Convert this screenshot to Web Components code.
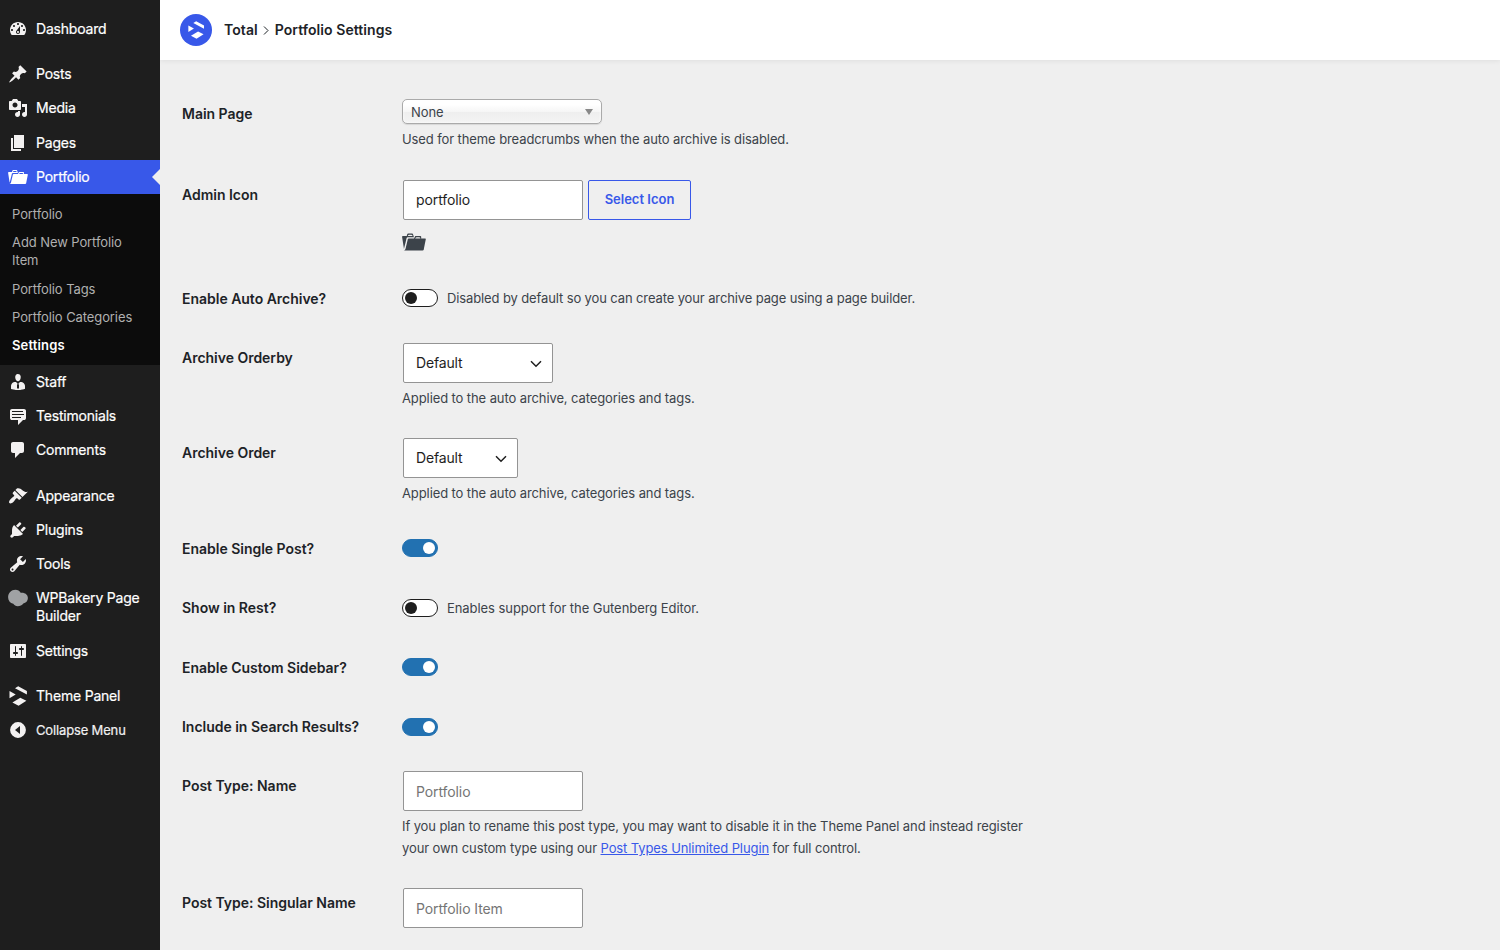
<!DOCTYPE html>
<html lang="en">
<head>
<meta charset="utf-8">
<title>Portfolio Settings</title>
<style>
html, body {
    height: 100%;
    margin: 0;
}
body {
    overflow: hidden;
    background: #efefef;
    color: #3c434a;
    font-family: Inter, "Liberation Sans", sans-serif;
    font-size: 13px;
}
</style>
</head>
<body>
<admin-shell>
    <admin-menu slot="menu">
        <menu-item icon="dashboard">Dashboard</menu-item>
        <menu-item icon="post" separated>Posts</menu-item>
        <menu-item icon="media">Media</menu-item>
        <menu-item icon="page">Pages</menu-item>
        <menu-item icon="portfolio" current>Portfolio</menu-item>
        <sub-menu>
            <sub-item>Portfolio</sub-item>
            <sub-item>Add New Portfolio Item</sub-item>
            <sub-item>Portfolio Tags</sub-item>
            <sub-item>Portfolio Categories</sub-item>
            <sub-item current>Settings</sub-item>
        </sub-menu>
        <menu-item icon="person">Staff</menu-item>
        <menu-item icon="testimonial">Testimonials</menu-item>
        <menu-item icon="comment">Comments</menu-item>
        <menu-item icon="appearance" separated>Appearance</menu-item>
        <menu-item icon="plugin">Plugins</menu-item>
        <menu-item icon="tool">Tools</menu-item>
        <menu-item icon="bakery">WPBakery Page Builder</menu-item>
        <menu-item icon="settings">Settings</menu-item>
        <menu-item icon="total" separated>Theme Panel</menu-item>
        <menu-item icon="collapse" small>Collapse Menu</menu-item>
    </admin-menu>
    <page-header slot="header">
        <span>Total</span>
        <span slot="page">Portfolio Settings</span>
    </page-header>
    <setting-row label="Main Page" style="height: 81px">
        <chosen-select>None</chosen-select>
        <help-text slot="help">Used for theme breadcrumbs when the auto archive is disabled.</help-text>
    </setting-row>
    <setting-row label="Admin Icon" style="height: 104px">
        <text-field value="portfolio"></text-field>
        <outline-button>Select Icon</outline-button>
        <dash-icon slot="help" name="portfolio" style="--size: 24px; margin-top: 10px"></dash-icon>
    </setting-row>
    <setting-row label="Enable Auto Archive?" style="height: 59px">
        <toggle-switch>Disabled by default so you can create your archive page using a page builder.</toggle-switch>
    </setting-row>
    <setting-row label="Archive Orderby" style="height: 95px">
        <select-box style="width: 150px">Default</select-box>
        <help-text slot="help">Applied to the auto archive, categories and tags.</help-text>
    </setting-row>
    <setting-row label="Archive Order" style="height: 96px">
        <select-box style="width: 115px">Default</select-box>
        <help-text slot="help">Applied to the auto archive, categories and tags.</help-text>
    </setting-row>
    <setting-row label="Enable Single Post?" style="height: 59px">
        <toggle-switch checked></toggle-switch>
    </setting-row>
    <setting-row label="Show in Rest?" style="height: 60px">
        <toggle-switch style="margin-top: 6px; letter-spacing: -.06px">Enables support for the Gutenberg Editor.</toggle-switch>
    </setting-row>
    <setting-row label="Enable Custom Sidebar?" style="height: 59px">
        <toggle-switch checked></toggle-switch>
    </setting-row>
    <setting-row label="Include in Search Results?" style="height: 59px">
        <toggle-switch checked style="margin-top: 6px"></toggle-switch>
    </setting-row>
    <setting-row label="Post Type: Name" style="height: 117px">
        <text-field placeholder="Portfolio"></text-field>
        <help-text slot="help">If you plan to rename this post type, you may want to disable it in the Theme Panel and instead register<br>your own custom type using our <a href="#">Post Types Unlimited Plugin</a> for full control.</help-text>
    </setting-row>
    <setting-row label="Post Type: Singular Name" style="height: 76px">
        <text-field placeholder="Portfolio Item"></text-field>
    </setting-row>
</admin-shell>

<script>
const ICONS = {
    dashboard: '<path d="M3.76 16h12.48c1.1-1.37 1.76-3.11 1.76-5 0-4.42-3.58-8-8-8s-8 3.58-8 8c0 1.89.66 3.63 1.76 5zM10 4c.55 0 1 .45 1 1s-.45 1-1 1-1-.45-1-1 .45-1 1-1zM6 6c.55 0 1 .45 1 1s-.45 1-1 1-1-.45-1-1 .45-1 1-1zm8 0c.55 0 1 .45 1 1s-.45 1-1 1-1-.45-1-1 .45-1 1-1zm-5.37 5.55L12 7v6c0 1.1-.9 2-2 2s-2-.9-2-2c0-.57.24-1.08.63-1.45zM4 10c.55 0 1 .45 1 1s-.45 1-1 1-1-.45-1-1 .45-1 1-1zm12 0c.55 0 1 .45 1 1s-.45 1-1 1-1-.45-1-1 .45-1 1-1zm-5 3c0-.55-.45-1-1-1s-1 .45-1 1 .45 1 1 1 1-.45 1-1z"/>',
    post: '<path d="M10.44 3.02l1.82-1.82 6.36 6.35-1.83 1.82c-1.05-.68-2.48-.57-3.41.36l-.75.75c-.92.93-1.04 2.35-.35 3.41l-1.83 1.82-2.41-2.41-2.8 2.79c-.42.42-3.38 2.71-3.8 2.29s1.86-3.39 2.28-3.81l2.79-2.79L4.1 9.36l1.83-1.82c1.05.69 2.48.57 3.4-.36l.75-.75c.93-.92 1.05-2.35.36-3.41z"/>',
    media: '<path d="M13 11V4c0-.55-.45-1-1-1h-1.67L9 1H5L3.67 3H2c-.55 0-1 .45-1 1v7c0 .55.45 1 1 1h10c.55 0 1-.45 1-1zM7 4.5c1.38 0 2.5 1.12 2.5 2.5S8.38 9.5 7 9.5 4.5 8.38 4.5 7 5.62 4.5 7 4.5zM14 6h5v10.5c0 1.38-1.12 2.5-2.5 2.5S14 17.88 14 16.5s1.12-2.5 2.5-2.5c.17 0 .34.02.5.05V9h-3V6zm-4 8.05V13h2v3.5c0 1.38-1.12 2.5-2.5 2.5S7 17.88 7 16.5 8.12 14 9.5 14c.17 0 .34.02.5.05z"/>',
    page: '<path d="M6 15V2h10v13H6zm-1 1h8v2H3V5h2v11z"/>',
    portfolio: '<path d="M4 5H.78c-.37 0-.74.32-.69.84l1.56 9.99S3.5 8.47 3.86 6.7c.11-.53.61-.7.98-.7H10s-.7-2.08-.77-2.31C9.11 3.25 8.89 3 8.45 3H5.14c-.36 0-.7.23-.8.64C4.25 4.04 4 5 4 5zm4.88 0h-4s.42-1 .87-1h2.13c.48 0 1 1 1 1zM2.67 16.25c-.31.47-.76.75-1.26.75h15.73c.54 0 .92-.31 1.03-.83.44-2.19 1.68-8.44 1.68-8.44.07-.5-.3-.73-.62-.73H16V5.53c0-.16-.26-.53-.66-.53h-3.76c-.52 0-.87.58-.87.58L10 7H5.59c-.32 0-.63.19-.69.5 0 0-1.59 6.7-1.72 7.33-.07.37-.22.99-.51 1.42zM15.38 7H11s.58-1 1.13-1h2.29c.71 0 .96 1 .96 1z"/>',
    person: '<path d="M7.3 6l-.03-.19c-.04-.37-.05-.73-.03-1.08.02-.36.1-.71.25-1.04.14-.32.31-.61.52-.86s.49-.46.83-.6c.34-.15.72-.23 1.13-.23.69 0 1.26.2 1.71.59s.76.87.91 1.44.18 1.16.09 1.78l-.03.19c-.01.09-.05.25-.11.48-.05.24-.12.47-.2.69-.08.21-.19.45-.34.72-.14.27-.3.49-.47.69-.18.19-.4.34-.67.48-.27.13-.55.19-.86.19s-.59-.06-.87-.19c-.26-.13-.49-.29-.67-.5-.18-.2-.34-.42-.49-.66-.15-.25-.26-.49-.34-.73-.09-.25-.16-.47-.21-.67-.06-.21-.1-.37-.12-.5zm9.200 6.240c.41.7.5 1.410.5 2.140v2.490c0 .03-.12.08-.29.13-.18.04-.42.13-.97.27-.55.12-1.100.24-1.650.34s-1.190.19-1.950.27c-.75.08-1.460.12-2.130.12-.68 0-1.390-.04-2.140-.12-.75-.07-1.400-.17-1.980-.27-.58-.11-1.080-.23-1.560-.34-.49-.11-.8-.21-1.060-.29L3 16.870v-2.490c0-.75.07-1.460.46-2.150s.81-1.250 1.500-1.680C5.660 10.120 7.190 10 8 10l1.670 1.670L9 13v3l1.020 1.080L11 16v-3l-.68-1.330L11.970 10c.77 0 2.200.07 2.900.52.71.45 1.210 1.020 1.630 1.720z"/>',
    testimonial: '<path d="M4 3h12c.55 0 1.02.2 1.41.59S18 4.45 18 5v7c0 .55-.2 1.02-.59 1.41S16.55 14 16 14h-1l-5 5v-5H4c-.55 0-1.02-.2-1.41-.59S2 12.55 2 12V5c0-.55.2-1.02.59-1.41S3.45 3 4 3zm11 2H4v1h11V5zm1 3H4v1h12V8zm-3 3H4v1h9v-1z"/>',
    comment: '<path d="M5 2h9c1.1 0 2 .9 2 2v7c0 1.1-.9 2-2 2h-2l-5 5v-5H5c-1.1 0-2-.9-2-2V4c0-1.1.9-2 2-2z"/>',
    appearance: '<path d="M14.48 11.06L7.41 3.99l1.5-1.5c.5-.56 2.3-.47 3.51.32 1.21.8 1.43 1.28 2.91 2.1 1.18.64 2.45 1.26 4.45.85zm-.71.71L6.7 4.7 4.93 6.47c-.39.39-.39 1.02 0 1.41l1.06 1.06c.39.39.39 1.03 0 1.42-.6.6-1.43 1.11-2.21 1.69-.35.26-.7.53-1.01.84C1.43 14.23.4 16.08 1.4 17.07c.99 1 2.84-.03 4.18-1.36.31-.31.58-.66.85-1.02.57-.78 1.08-1.61 1.69-2.21.39-.39 1.02-.39 1.41 0l1.06 1.06c.39.39 1.02.39 1.41 0z"/>',
    plugin: '<path d="M13.11 4.36L9.87 7.6 8 5.73l3.24-3.24c.35-.34 1.05-.2 1.56.32.52.51.66 1.21.31 1.55zm-8 1.77l.91-1.12 9.01 9.01-1.19.84c-.71.71-2.63 1.16-3.82 1.16H6.14L4.9 17.26c-.59.59-1.54.59-2.12 0-.59-.58-.59-1.53 0-2.12l1.24-1.24v-3.88c0-1.13.4-3.19 1.09-3.89zm7.26 3.97l3.24-3.24c.34-.35 1.04-.21 1.55.31.52.51.66 1.21.31 1.55l-3.24 3.25z"/>',
    tool: '<path d="M16.68 9.77c-1.34 1.34-3.3 1.67-4.95.99l-5.41 6.52c-.99.99-2.59.99-3.58 0s-.99-2.59 0-3.57l6.52-5.42c-.68-1.65-.35-3.61.99-4.95 1.28-1.28 3.12-1.62 4.72-1.06l-2.89 2.89 2.82 2.82 2.86-2.87c.53 1.58.18 3.39-1.08 4.65zM3.81 16.21c.4.39 1.04.39 1.43 0 .4-.4.4-1.04 0-1.43-.39-.4-1.03-.4-1.43 0-.39.39-.39 1.03 0 1.43z"/>',
    bakery: '<path fill="#a0a2a4" d="M7.4 1.8c2.4 0 4.2 1.1 5.3 3 3.8-.6 7.2 1.6 7.2 5.2 0 3-2 5-4.6 5.5-1.3 1.7-3.2 2.8-5.6 2.8-2 0-3.4-1-4.4-2.5C2 14.9.1 12.5.1 9.2.1 5 3.3 1.8 7.4 1.8z"/>',
    settings: '<path d="M18 16V4c0-.55-.45-1-1-1H3c-.55 0-1 .45-1 1v12c0 .55.45 1 1 1h14c.55 0 1-.45 1-1zM8 11h1c.55 0 1 .45 1 1s-.45 1-1 1H8v1.5c0 .28-.22.5-.5.5s-.5-.22-.5-.5V13H6c-.55 0-1-.45-1-1s.45-1 1-1h1V5.5c0-.28.22-.5.5-.5s.5.22.5.5V11zm5-2h-1c-.55 0-1-.45-1-1s.45-1 1-1h1V5.5c0-.28.22-.5.5-.5s.5.22.5.5V7h1c.55 0 1 .45 1 1s-.45 1-1 1h-1v5.5c0 .28-.22.5-.5.5s-.5-.22-.5-.5V9z"/>',
    total: '<path d="M7 2.2 10.2.3l8.7 4.7v3.6zM1.5 4.9l6.2 3.5-6.2 3.8zM4.4 16.5l7.9-4.7 6.1 3-7.8 4.9z"/>',
    collapse: '<path fill-rule="evenodd" d="M10 2.1a7.9 7.9 0 1 1 0 15.8 7.9 7.9 0 0 1 0-15.8zM12 6v8l-5-4z"/>',
};

// Attaches an open root holding the given styles and markup
function render(element, html) {
    const template = document.createElement('template');
    template.innerHTML = html;
    element.attachShadow({mode: 'open'}).appendChild(template.content.cloneNode(true));
}

class DashIcon extends HTMLElement {
    connectedCallback() {
        if (this.shadowRoot) {
            return;
        }
        render(this, `
<style>
:host {
    display: block;
    flex: none;
    width: var(--size, 20px);
    height: var(--size, 20px);
}
svg {
    display: block;
    width: 100%;
    height: 100%;
    fill: currentColor;
}
</style>
<svg viewBox="0 0 20 20">${ICONS[this.getAttribute('name')] || ''}</svg>`);
    }
}

class AdminShell extends HTMLElement {
    constructor() {
        super();
        render(this, `
<style>
:host {
    display: grid;
    grid-template-columns: 160px 1fr;
    height: 100vh;
}
main {
    min-width: 0;
    overflow: hidden;
}
.settings {
    padding: 25px 22px 0;
}
</style>
<slot name="menu"></slot>
<main>
    <slot name="header"></slot>
    <div class="settings"><slot></slot></div>
</main>`);
    }
}

class AdminMenu extends HTMLElement {
    constructor() {
        super();
        render(this, `
<style>
:host {
    display: block;
    padding-top: 12px;
    background: #1e1e1e;
}
</style>
<slot></slot>`);
    }
}

class MenuItem extends HTMLElement {
    connectedCallback() {
        if (this.shadowRoot) {
            return;
        }
        render(this, `
<style>
:host {
    display: flex;
    position: relative;
    gap: 8px;
    padding: 8px 12px 8px 8px;
    color: #fff;
    font-size: 14px;
    letter-spacing: -.2px;
    line-height: 18.2px;
    -webkit-text-stroke: .2px currentColor;
}
:host([separated]) {
    margin-top: 11px;
}
:host([current]) {
    background: #3858e9;
}
:host([current])::after {
    content: "";
    position: absolute;
    right: 0;
    top: 9px;
    border: 8px solid transparent;
    border-left: 0;
    border-right-color: #efefef;
}
:host([small]) {
    margin-top: -.5px;
    font-size: 13px;
    letter-spacing: -.15px;
    color: #f0f0f1;
}
dash-icon {
    margin: -1px 0;
    height: 20px;
    color: #f3f1f1;
}
:host([current]) dash-icon {
    color: #fff;
}
</style>
<dash-icon name="${this.getAttribute('icon')}"></dash-icon>
<span><slot></slot></span>`);
    }
}

class SubMenu extends HTMLElement {
    constructor() {
        super();
        render(this, `
<style>
:host {
    display: block;
    padding: 6px 0 5.8px;
    background: #0c0c0c;
}
</style>
<slot></slot>`);
    }
}

class SubItem extends HTMLElement {
    constructor() {
        super();
        render(this, `
<style>
:host {
    display: block;
    padding: 5px 12px;
    color: #b0b0b0;
    letter-spacing: -.09px;
    line-height: 18.2px;
}
:host([current]) {
    color: #fff;
    font-weight: 600;
    letter-spacing: .15px;
}
</style>
<slot></slot>`);
    }
}

class PageHeader extends HTMLElement {
    constructor() {
        super();
        render(this, `
<style>
:host {
    display: flex;
    box-sizing: border-box;
    align-items: center;
    height: 60px;
    padding-left: 20px;
    background: #fff;
    box-shadow: 0 1px 5px rgba(0, 0, 0, .07);
    color: #1d2327;
    font-size: 14px;
    font-weight: 600;
    letter-spacing: .07px;
    line-height: 18px;
}
.logo {
    display: grid;
    place-items: center;
    width: 32px;
    height: 32px;
    margin-right: 12px;
    border-radius: 50%;
    background: #3858e9;
    color: #fff;
    --size: 18px;
}
.sep {
    width: 6px;
    height: 9px;
    margin: 0 5.5px;
    fill: none;
    stroke: #1d2327;
}
</style>
<div class="logo"><dash-icon name="total"></dash-icon></div>
<slot></slot>
<svg class="sep" viewBox="0 0 6 9"><path d="M1 .5l4 4-4 4"/></svg>
<slot name="page"></slot>`);
    }
}

class SettingRow extends HTMLElement {
    connectedCallback() {
        if (this.shadowRoot) {
            return;
        }
        render(this, `
<style>
:host {
    display: grid;
    grid-template-columns: 220px 1fr;
}
.label {
    padding-top: 20px;
    color: #1d2327;
    font-size: 14px;
    font-weight: 600;
    letter-spacing: -.02px;
    line-height: 18px;
}
.field {
    padding-top: 14px;
}
.controls {
    display: flex;
    gap: 5px;
}
</style>
<div class="label">${this.getAttribute('label')}</div>
<div class="field">
    <div class="controls"><slot></slot></div>
    <slot name="help"></slot>
</div>`);
    }
}

class HelpText extends HTMLElement {
    constructor() {
        super();
        render(this, `
<style>
:host {
    display: block;
    margin-top: 4px;
    letter-spacing: -.1px;
    line-height: 22px;
}
::slotted(a) {
    color: #3858e9;
}
</style>
<slot></slot>`);
    }
}

class TextField extends HTMLElement {
    connectedCallback() {
        if (this.shadowRoot) {
            return;
        }
        const value = this.getAttribute('value');
        render(this, `
<style>
:host {
    display: block;
    box-sizing: border-box;
    width: 180px;
    height: 40px;
    margin-left: 1px;
    padding: 0 12px;
    border: 1px solid #949494;
    border-radius: 2px;
    background: #fff;
    color: #1e1e1e;
    font-size: 14px;
    letter-spacing: -.1px;
    line-height: 38px;
}
.placeholder {
    display: block;
    padding-top: 1px;
    color: #757575;
}
</style>
<span class="${value ? 'value' : 'placeholder'}">${value || this.getAttribute('placeholder')}</span>`);
    }
}

class OutlineButton extends HTMLElement {
    constructor() {
        super();
        render(this, `
<style>
:host {
    display: block;
    box-sizing: border-box;
    width: 103px;
    height: 40px;
    border: 1px solid #3858e9;
    border-radius: 2px;
    color: #3858e9;
    font-weight: 600;
    line-height: 36px;
    text-align: center;
}
</style>
<slot></slot>`);
    }
}

class SelectBox extends HTMLElement {
    constructor() {
        super();
        render(this, `
<style>
:host {
    display: flex;
    box-sizing: border-box;
    align-items: center;
    justify-content: space-between;
    height: 40px;
    margin-left: 1px;
    padding: 0 10px 0 12px;
    border: 1px solid #949494;
    border-radius: 2px;
    background: #fff;
    color: #1e1e1e;
    font-size: 14px;
    letter-spacing: -.15px;
    line-height: 38px;
}
svg {
    width: 12px;
    height: 8px;
    margin-top: 2px;
    fill: none;
    stroke: #1e1e1e;
    stroke-width: 1.5;
}
</style>
<span><slot></slot></span>
<svg viewBox="0 0 12 8"><path d="M1 1.2l5 5 5-5"/></svg>`);
    }
}

class ChosenSelect extends HTMLElement {
    constructor() {
        super();
        render(this, `
<style>
:host {
    display: flex;
    box-sizing: border-box;
    align-items: center;
    justify-content: space-between;
    width: 200px;
    height: 25px;
    padding: 1px 8px 0;
    border: 1px solid #aaa;
    border-radius: 5px;
    background: linear-gradient(#fff 20%, #f6f6f6 50%, #eee 52%, #f4f4f4 100%);
    box-shadow: 0 0 3px #fff inset, 0 1px 1px rgba(0, 0, 0, .1);
    color: #3c434a;
    letter-spacing: -.1px;
}
i {
    margin-top: -1px;
    border: 4px solid transparent;
    border-top: 6px solid #888;
    border-bottom: 0;
}
</style>
<span><slot></slot></span>
<i></i>`);
    }
}

class ToggleSwitch extends HTMLElement {
    constructor() {
        super();
        render(this, `
<style>
:host {
    display: flex;
    align-items: center;
    gap: 9px;
    margin-top: 5px;
    letter-spacing: -.12px;
    line-height: 18px;
}
.track {
    display: flex;
    box-sizing: border-box;
    align-items: center;
    width: 36px;
    height: 18px;
    padding: 0 2px;
    border: 1px solid #1e1e1e;
    border-radius: 9px;
    background: #fff;
}
.thumb {
    width: 12px;
    height: 12px;
    border-radius: 50%;
    background: #1e1e1e;
}
:host([checked]) .track {
    justify-content: flex-end;
    border-color: #2271b1;
    background: #2271b1;
}
:host([checked]) .thumb {
    background: #fff;
}
</style>
<div class="track"><div class="thumb"></div></div>
<span><slot></slot></span>`);
    }
}

customElements.define('dash-icon', DashIcon);
customElements.define('admin-shell', AdminShell);
customElements.define('admin-menu', AdminMenu);
customElements.define('menu-item', MenuItem);
customElements.define('sub-menu', SubMenu);
customElements.define('sub-item', SubItem);
customElements.define('page-header', PageHeader);
customElements.define('setting-row', SettingRow);
customElements.define('help-text', HelpText);
customElements.define('text-field', TextField);
customElements.define('outline-button', OutlineButton);
customElements.define('select-box', SelectBox);
customElements.define('chosen-select', ChosenSelect);
customElements.define('toggle-switch', ToggleSwitch);
</script>
</body>
</html>
